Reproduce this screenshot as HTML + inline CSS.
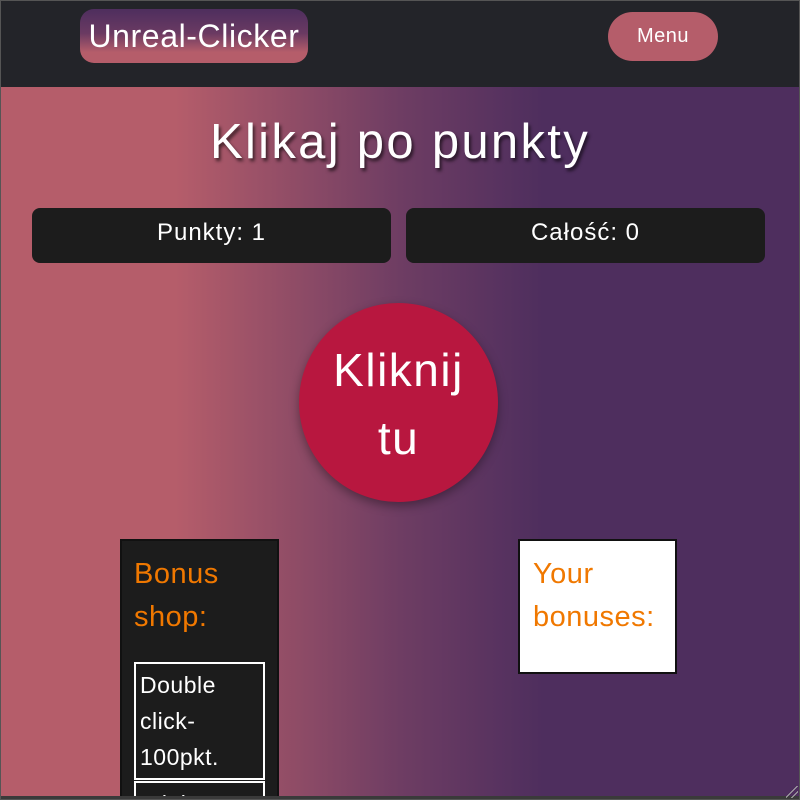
<!DOCTYPE html>
<html><head><meta charset="utf-8"><style>
*{margin:0;padding:0;box-sizing:border-box}
html,body{width:800px;height:800px;overflow:hidden}
body{position:relative;font-family:"Liberation Sans",sans-serif;background:linear-gradient(90deg,#b55d6a 0%,#b55d6a 22%,#6e3d63 50%,#4e2e5e 68%,#4e2e5e 100%);}
.hdr{position:absolute;left:0;top:0;width:800px;height:87px;background:#232429}
.logo{position:absolute;left:80px;top:9px;width:228px;height:54px;border-radius:14px;background:linear-gradient(180deg,#4e2e5e 0%,#6a3a62 45%,#b55d6a 80%);color:#fff;font-size:32px;line-height:54px;text-align:center;letter-spacing:0.6px;white-space:nowrap}
.menu{position:absolute;left:608px;top:12px;width:110px;height:49px;border-radius:25px;background:#b55d6a;color:#fff;font-size:20px;line-height:49px;text-align:center;letter-spacing:0.5px}
h1{position:absolute;left:0;top:114px;width:800px;text-align:center;color:#fff;font-weight:normal;font-size:49px;letter-spacing:2.3px;text-shadow:2px 3px 3px rgba(0,0,0,.6)}
.box{position:absolute;top:208px;height:55px;background:#1c1c1c;border-radius:8px;color:#fff;font-size:24px;letter-spacing:1px;line-height:50px;text-align:center}
.btn{position:absolute;left:299px;top:303px;width:199px;height:199px;border-radius:50%;background:#b8173f;color:#fff;font-size:46px;letter-spacing:1.5px;line-height:68px;text-align:center;padding-top:33px;box-shadow:0 4px 10px rgba(0,0,0,.35)}
.shop{position:absolute;left:120px;top:539px;width:159px;height:262px;overflow:hidden;background:#1c1c1c;border:2px solid #111;padding:12px 12px}
.yb{position:absolute;left:518px;top:539px;width:159px;height:135px;background:#fff;border:2px solid #111;padding:12px 13px}
.t{color:#f07800;font-size:29px;letter-spacing:0.5px;line-height:43px}
.item{border:2px solid #fff;color:#fff;font-size:23px;letter-spacing:0.5px;line-height:36px;padding:3px 4px;width:131px}
.edge{position:absolute;inset:0;border:1px solid #555;pointer-events:none}
</style></head><body>
<div class="hdr"></div>
<div class="logo">Unreal-Clicker</div>
<div class="menu">Menu</div>
<h1>Klikaj po punkty</h1>
<div class="box" style="left:32px;width:359px">Punkty: 1</div>
<div class="box" style="left:406px;width:359px">Całość: 0</div>
<div class="btn">Kliknij<br>tu</div>
<div class="shop"><div class="t">Bonus<br>shop:</div>
<div class="item" style="margin-top:23px;height:118px">Double<br>click-<br>100pkt.</div>
<div class="item" style="margin-top:1px;height:60px">Triple</div></div>
<div class="yb"><div class="t">Your<br>bonuses:</div></div>
<div style="position:absolute;left:0;top:796px;width:800px;height:4px;background:#3a3a3a"></div>
<div style="position:absolute;right:2px;bottom:2px;width:12px;height:12px;background:linear-gradient(135deg,transparent 45%,#aaa 45%,#aaa 52%,transparent 52%,transparent 70%,#aaa 70%,#aaa 77%,transparent 77%)"></div>
<div class="edge"></div>
</body></html>
